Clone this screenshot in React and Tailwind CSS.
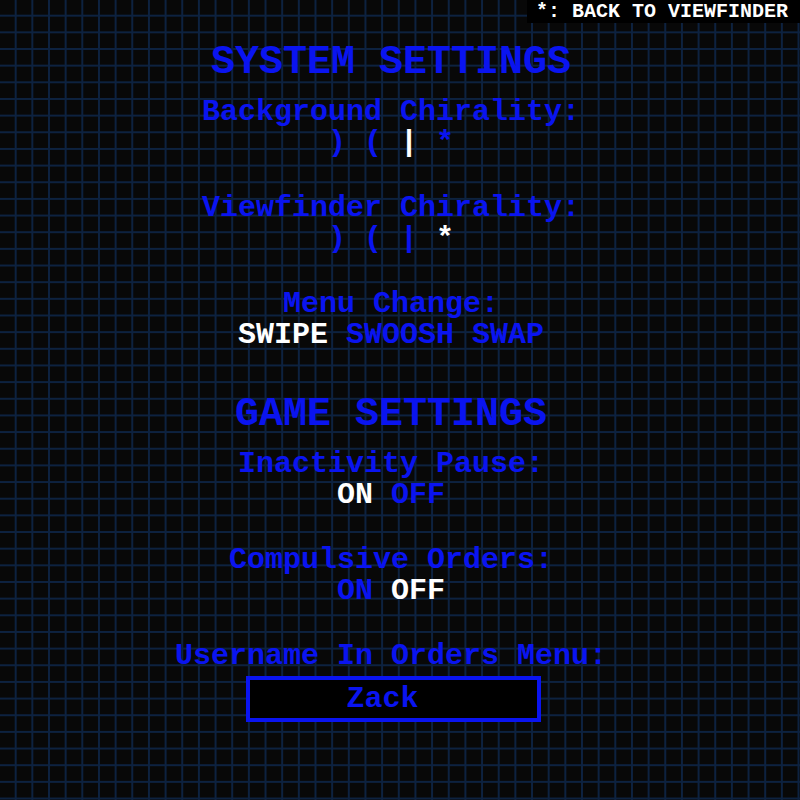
import React from 'react';

const BLUE = 'text-[#0a14f0]';

function Options({ items, active }) {
  return (
    <div className="text-[30px] leading-[31px] font-bold whitespace-pre">
      {items.map((item, i) => (
        <React.Fragment key={i}>
          {i > 0 && ' '}
          <span className={i === active ? 'text-white' : BLUE}>{item}</span>
        </React.Fragment>
      ))}
    </div>
  );
}

function Setting({ label, items, active, className = '' }) {
  return (
    <div className={`flex flex-col items-center ${className}`}>
      <div className={`text-[30px] leading-[31px] font-bold ${BLUE}`}>{label}</div>
      <Options items={items} active={active} />
    </div>
  );
}

export default function App() {
  return (
    <div
      className="relative w-[800px] h-[800px] overflow-hidden bg-[#080808] bg-[linear-gradient(to_right,transparent_15px,#0d2240_15px,#0d2240_17px,transparent_17px),linear-gradient(to_bottom,transparent_15px,#0d2240_15px,#0d2240_17px,transparent_17px)] bg-[size:16.667px_16.667px]"
      style={{ fontFamily: '"Liberation Mono", "DejaVu Sans Mono", monospace' }}
    >
      <div className="absolute top-0 right-0 bg-black text-white text-[20px] leading-[23px] font-bold pl-[9px] pr-3 whitespace-pre">
        *: BACK TO VIEWFINDER
      </div>

      <div className="flex flex-col items-center pt-[43px] pr-[18px]">
        <h1 className={`text-[40px] leading-[40px] font-bold ${BLUE}`}>SYSTEM SETTINGS</h1>

        <Setting className="mt-[14px]" label="Background Chirality:" items={[')', '(', '|', '*']} active={2} />
        <Setting className="mt-[34px]" label="Viewfinder Chirality:" items={[')', '(', '|', '*']} active={3} />
        <Setting className="mt-[34px]" label="Menu Change:" items={['SWIPE', 'SWOOSH', 'SWAP']} active={0} />

        <h1 className={`mt-[44px] text-[40px] leading-[40px] font-bold ${BLUE}`}>GAME SETTINGS</h1>

        <Setting className="mt-[14px]" label="Inactivity Pause:" items={['ON', 'OFF']} active={0} />
        <Setting className="mt-[34px]" label="Compulsive Orders:" items={['ON', 'OFF']} active={1} />

        <div className="mt-[34px] flex flex-col items-center">
          <div className={`text-[30px] leading-[31px] font-bold ${BLUE}`}>Username In Orders Menu:</div>
          <div className={`mt-[4px] ml-[5px] w-[295px] h-[46px] border-4 border-[#0a14f0] bg-black flex items-center justify-center pr-[22px] text-[30px] font-bold ${BLUE}`}>
            Zack
          </div>
        </div>
      </div>
    </div>
  );
}
